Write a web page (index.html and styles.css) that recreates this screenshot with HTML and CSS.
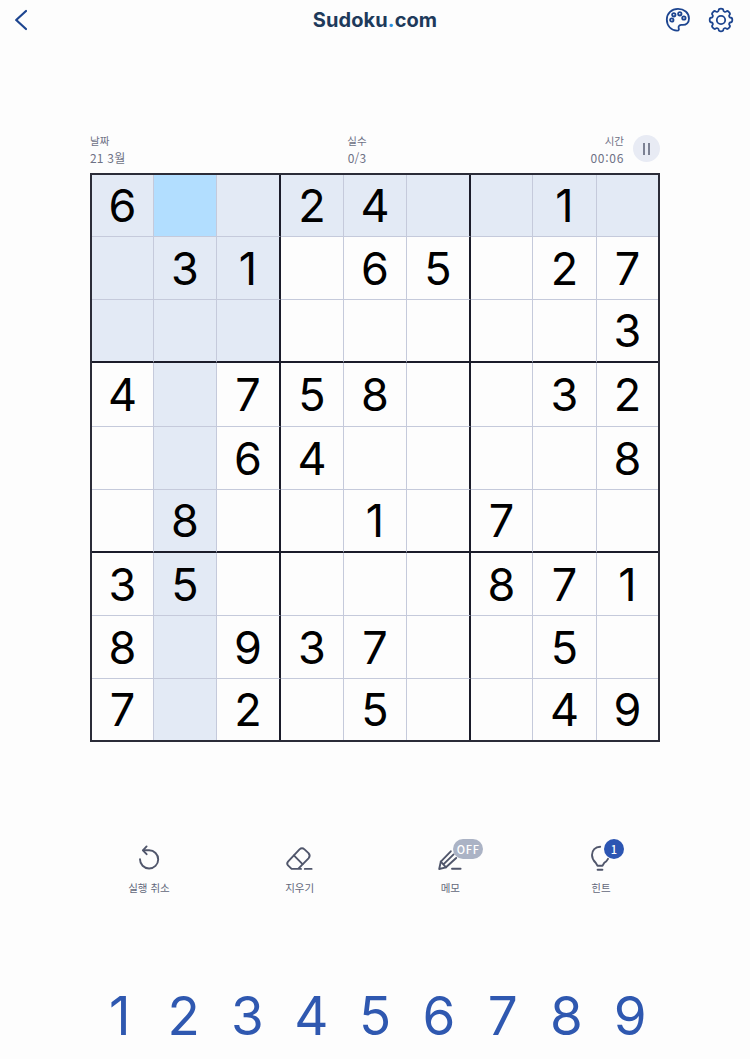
FILE: index.html
```html
<!DOCTYPE html>
<html lang="ko">
<head>
    <meta charset="UTF-8">
    <meta name="viewport" content="width=device-width, initial-scale=1.0">
    <title>Sudoku.com</title>
    <link rel="stylesheet" href="styles.css">
</head>
<body>

<header class="topbar">
    <svg class="back" width="14" height="24" viewBox="0 0 14 24">
        <path d="M13 3 L3.2 12 L13 21"/>
    </svg>
    <h1>Sudoku<span class="dot">.</span>com</h1>
    <div class="topbar-icons">
        <svg width="26" height="26" viewBox="0 0 26 26">
            <path d="M13 1.9 C6.7 1.9 1.8 6.4 1.8 12.6 C1.8 19 6.4 23.6 12 23.6 C14.4 23.6 14 22.2 13.6 20.8 C13.2 18.6 15 17.6 17 17.9 C21.5 18.3 24 15.5 24 11.5 C24 5.8 19 1.9 13 1.9 Z"/>
            <circle cx="6.8" cy="13" r="1.7"/>
            <circle cx="8.8" cy="7.8" r="1.7"/>
            <circle cx="14.8" cy="6.8" r="1.7"/>
            <circle cx="18.9" cy="11" r="1.7"/>
        </svg>
        <svg width="26" height="26" viewBox="0 0 26 26">
            <path id="gear" d=""/>
            <circle cx="13" cy="13" r="4.2"/>
        </svg>
    </div>
</header>

<main class="game">
    <div class="info">
        <div class="stat">
            <span class="label">날짜</span>
            <span class="value">21 3월</span>
        </div>
        <div class="stat mistakes">
            <span class="label">실수</span>
            <span class="value">0/3</span>
        </div>
        <div class="stat timer">
            <span class="label">시간</span>
            <span class="value">00:06</span>
        </div>
        <button class="pause"><i></i><i></i></button>
    </div>

    <div class="board" id="board"></div>

    <div class="tools">
        <button class="tool">
            <svg width="30" height="30" viewBox="0 0 30 30">
                <path d="M6 15.3 A9.1 9.1 0 1 0 15.1 6.3 L9.4 6.3"/>
                <path d="M12.6 2.4 L8.9 6.3 L12.6 10.2"/>
            </svg>
            <span>실행 취소</span>
        </button>
        <button class="tool">
            <svg width="30" height="30" viewBox="0 0 30 30">
                <path d="M16 24.9 H6.6 L3 21.3 Q1.4 19.5 3 17.7 L14.5 5.4 Q17 3.2 19.5 5.4 L23.5 9.1 Q25.8 11.7 23.5 14.3 L13.4 24.7"/>
                <path d="M8.9 11.4 L17.5 20.1 M19.8 24.9 H26.6"/>
            </svg>
            <span>지우기</span>
        </button>
        <button class="tool">
            <svg width="30" height="30" viewBox="0 0 30 30">
                <path d="M15.8 7.3 L5.8 17.6 L4.2 25 L11 23.3 L21.2 14"/>
                <path d="M18.6 10.4 L8.4 20.4 M5.8 17.6 L11 23.3 M17 24.8 H25.6"/>
            </svg>
            <span>메모</span>
            <b class="badge off">OFF</b>
        </button>
        <button class="tool">
            <svg width="30" height="30" viewBox="0 0 30 30">
                <path d="M14.2 2.8 C9.2 2.8 6 6.4 6 11 C6 14.8 7.8 17 9.7 18.8 L11.5 21.7 H16.5 L18.3 18.8 C20 17.6 21.2 16.4 22 14.8"/>
                <path d="M11.6 25.8 H16.4"/>
            </svg>
            <span>힌트</span>
            <b class="badge count">1</b>
        </button>
    </div>

    <div class="numpad">
        <button>1</button>
        <button>2</button>
        <button>3</button>
        <button>4</button>
        <button>5</button>
        <button>6</button>
        <button>7</button>
        <button>8</button>
        <button>9</button>
    </div>
</main>

<script>
    const puzzle = [
        "6..24..1.",
        ".31.65.27",
        "........3",
        "4.758..32",
        "..64....8",
        ".8..1.7..",
        "35....871",
        "8.937..5.",
        "7.2.5..49"
    ];
    const selected = { row: 0, col: 1 };
    const board = document.getElementById("board");

    for (let r = 0; r < 9; r++) {
        for (let c = 0; c < 9; c++) {
            const cell = document.createElement("div");
            cell.className = "cell";
            const sameBox = Math.floor(r / 3) === Math.floor(selected.row / 3) &&
                Math.floor(c / 3) === Math.floor(selected.col / 3);
            if (r === selected.row && c === selected.col) {
                cell.classList.add("selected");
            } else if (r === selected.row || c === selected.col || sameBox) {
                cell.classList.add("related");
            }
            if (c === 2 || c === 5) cell.classList.add("box-right");
            if (r === 2 || r === 5) cell.classList.add("box-bottom");
            if (puzzle[r][c] !== ".") cell.innerText = puzzle[r][c];
            board.appendChild(cell);
        }
    }

    // Gear outline: 8 rounded teeth, curved through the midpoints
    const points = [];
    for (let i = 0; i < 8; i++) {
        [[-15, 9], [-11, 11.5], [11, 11.5], [15, 9]].forEach(([offset, radius]) => {
            const a = (i * 45 + offset) * Math.PI / 180;
            points.push([13 + radius * Math.sin(a), 13 - radius * Math.cos(a)]);
        });
    }
    const mid = (p, q) => ((p[0] + q[0]) / 2).toFixed(2) + " " + ((p[1] + q[1]) / 2).toFixed(2);
    let d = "M" + mid(points[points.length - 1], points[0]);
    points.forEach((p, i) => {
        d += " Q" + p[0].toFixed(2) + " " + p[1].toFixed(2) + " " + mid(p, points[(i + 1) % points.length]);
    });
    document.getElementById("gear").setAttribute("d", d + " Z");
</script>

</body>
</html>
```
FILE: styles.css
```css
* {
    box-sizing: border-box;
}
body {
    margin: 0;
    height: 1059px;
    overflow: hidden;
    background-color: #fdfdfd;
    font-family: Inter, "Noto Sans CJK KR", sans-serif;
}
button {
    padding: 0;
    border: none;
    background: none;
    font-family: inherit;
    cursor: pointer;
}
svg {
    display: block;
    fill: none;
    stroke-linecap: round;
    stroke-linejoin: round;
}
.topbar {
    display: grid;
    grid-template-columns: 1fr auto 1fr;
    align-items: center;
    height: 40px;
    padding: 0 16px 0 13px;
}
.topbar svg {
    stroke: #1d4590;
    stroke-width: 1.8;
}
.topbar .back {
    stroke-width: 2.2;
}
.topbar h1 {
    margin: 0 0 0 3px;
    font-size: 20px;
    line-height: 40px;
    font-weight: 700;
    letter-spacing: 0.1px;
    color: #1e3a5b;
}
.topbar .dot {
    color: #2b8fe0;
}
.topbar-icons {
    display: flex;
    justify-content: flex-end;
    gap: 17px;
}
.game {
    width: 570px;
    margin: 93px auto 0;
}
.info {
    display: grid;
    grid-template-columns: 1fr auto 1fr 36px;
    height: 40px;
    color: #6e7185;
    font-family: "Noto Sans CJK KR", sans-serif;
}
.stat {
    display: flex;
    flex-direction: column;
}
.label {
    font-size: 10.5px;
    line-height: 16px;
}
.value {
    font-size: 12px;
    line-height: 17px;
    letter-spacing: 0.2px;
}
.mistakes {
    text-align: center;
}
.timer {
    text-align: right;
}
.timer .value {
    letter-spacing: 0.7px;
}
.pause {
    display: flex;
    justify-content: center;
    align-items: center;
    gap: 3px;
    width: 27px;
    height: 27px;
    margin: 2px 0 0 9px;
    border-radius: 50%;
    background-color: #e8ebf4;
}
.pause i {
    width: 2px;
    height: 12px;
    background-color: #7c8193;
}
.board {
    display: grid;
    grid-template-columns: 62px 63px 64px 63px 63px 64px 62px 64px 61px;
    grid-template-rows: 62px 63px 63px 64px 63px 63px 63px 63px 61px;
    border: 2px solid #2b2c38;
}
.cell {
    display: flex;
    justify-content: center;
    align-items: center;
    border-right: 1px solid #c5cadb;
    border-bottom: 1px solid #c5cadb;
    font-size: 45px;
    font-weight: 385;
    line-height: 1;
    color: #000;
}
.cell:nth-child(9n) {
    border-right: none;
}
.cell:nth-child(n+73) {
    border-bottom: none;
}
.cell.box-right {
    border-right: 2px solid #1b1c2a;
}
.cell.box-bottom {
    border-bottom: 2px solid #1b1c2a;
}
.related {
    background-color: #e3eaf5;
}
.selected {
    background-color: #b2deff;
}
.tools {
    display: flex;
    justify-content: space-between;
    margin: 102px -16px 0;
}
.tool {
    position: relative;
    display: flex;
    flex-direction: column;
    align-items: center;
    width: 150px;
    color: #62677a;
    font-family: "Noto Sans CJK KR", sans-serif;
    font-size: 10.5px;
    line-height: 16px;
}
.tool svg {
    stroke: #50566b;
    stroke-width: 1.9;
    margin-bottom: 6px;
}
.badge {
    position: absolute;
    display: flex;
    justify-content: center;
    align-items: center;
    color: #fff;
    font-weight: 500;
}
.off {
    top: -5px;
    left: 78px;
    width: 30px;
    height: 20px;
    border-radius: 10px;
    background-color: #abb3c5;
    font-size: 11px;
    letter-spacing: 0.8px;
}
.count {
    top: -5px;
    left: 78px;
    width: 20px;
    height: 20px;
    border-radius: 50%;
    background-color: #2c55b2;
    font-size: 11px;
}
.numpad {
    display: grid;
    grid-template-columns: repeat(9, 63.8px);
    margin: 88px -2px 0;
}
.numpad button {
    height: 64px;
    font-size: 53px;
    font-weight: 420;
    line-height: 64px;
    color: #2f58b0;
}
```
